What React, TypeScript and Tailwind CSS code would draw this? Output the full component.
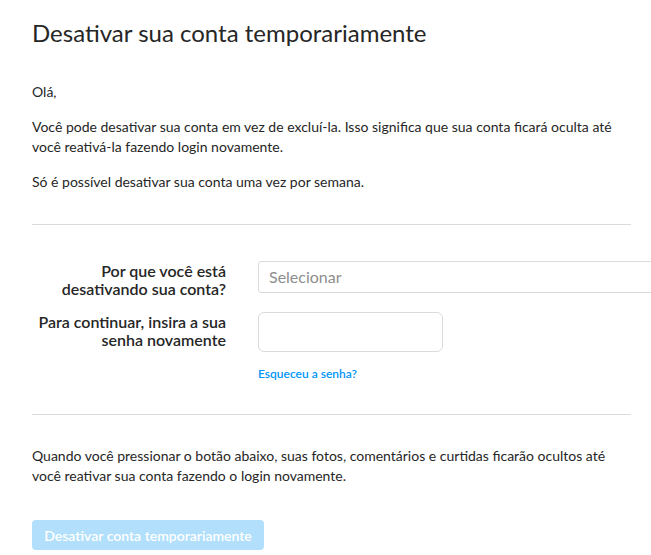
import React from 'react';

export default function App() {
  return (
    <div className="w-[651px] h-[555px] overflow-hidden bg-white text-[#262626] font-['Lato','Noto_Sans',sans-serif]">
      <div className="w-[599px] ml-8">
        <h1 className="text-[24px] leading-[28px] font-normal pt-[19px]">Desativar sua conta temporariamente</h1>

        <div className="mt-[35px] text-[14px] leading-[20px]">
          <p>Olá,</p>
          <p className="mt-[15px]">
            Você pode desativar sua conta em vez de excluí-la. Isso significa que sua conta ficará oculta até você reativá-la fazendo login novamente.
          </p>
          <p className="mt-[15px]">Só é possível desativar sua conta uma vez por semana.</p>
        </div>

        <hr className="mt-[32px] border-t border-[#dbdbdb]" />

        {/* Form */}
        <div className="mt-[36px] flex flex-col gap-[14px]">
          <div className="flex items-start gap-8">
            <label className="w-[194px] shrink-0 text-right text-[16px] leading-[18px] font-semibold pt-[1px]">
              Por que você está desativando sua conta?
            </label>
            <div className="w-[420px] shrink-0 h-[32px] border border-[#dbdbdb] rounded-[3px] flex items-center px-[10px] text-[16px] text-[#8e8e8e]">
              Selecionar
            </div>
          </div>

          <div className="flex items-start gap-8">
            <label className="w-[194px] shrink-0 text-right text-[16px] leading-[18px] font-semibold pt-[1px]">
              Para continuar, insira a sua senha novamente
            </label>
            <div>
              <input
                type="password"
                className="block w-[185px] h-[40px] border border-[#dbdbdb] rounded-[6px] bg-white outline-none"
              />
              <a className="block mt-[15px] text-[12px] leading-[14px] font-semibold text-[#0095f6]">Esqueceu a senha?</a>
            </div>
          </div>
        </div>

        <hr className="mt-[33px] border-t border-[#dbdbdb]" />

        <p className="mt-[31px] text-[14px] leading-[20px]">
          Quando você pressionar o botão abaixo, suas fotos, comentários e curtidas ficarão ocultos até você reativar sua conta fazendo o login novamente.
        </p>

        <button className="mt-[34px] w-[232px] h-[30px] rounded-[4px] bg-[#b2dffc] text-white text-[14px] font-semibold">
          Desativar conta temporariamente
        </button>
      </div>
    </div>
  );
}
